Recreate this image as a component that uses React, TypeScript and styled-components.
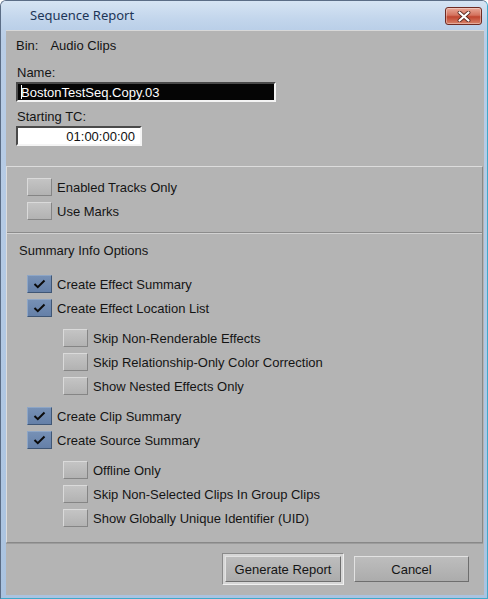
import React from "react";
import styled, { createGlobalStyle } from "styled-components";

const GlobalStyle = createGlobalStyle`
  html, body {
    margin: 0;
    padding: 0;
    background: #ffffff;
  }
`;

interface Option {
  label: string;
  checked?: boolean;
  nested?: boolean;
}

const summaryGroups: Option[][] = [
  [
    { label: "Create Effect Summary", checked: true },
    { label: "Create Effect Location List", checked: true },
  ],
  [
    { label: "Skip Non-Renderable Effects", nested: true },
    { label: "Skip Relationship-Only Color Correction", nested: true },
    { label: "Show Nested Effects Only", nested: true },
  ],
  [
    { label: "Create Clip Summary", checked: true },
    { label: "Create Source Summary", checked: true },
  ],
  [
    { label: "Offline Only", nested: true },
    { label: "Skip Non-Selected Clips In Group Clips", nested: true },
    { label: "Show Globally Unique Identifier (UID)", nested: true },
  ],
];

// Window frame
const Window = styled.div`
  width: 488px;
  height: 599px;
  box-sizing: border-box;
  display: flex;
  flex-direction: column;
  background: linear-gradient(#c9daee, #b9cde6 40px, #aac3e0);
  border: 1px solid #5b6d86;
  border-bottom-color: #3fa9c9;
  border-right-color: #3fa9c9;
  border-radius: 6px 6px 0 0;
  font-family: "Liberation Sans", Arial, sans-serif;
  font-size: 13px;
  color: #141414;
  overflow: hidden;
`;

const TitleBar = styled.div`
  height: 29px;
  flex-shrink: 0;
  display: flex;
  align-items: center;
  justify-content: space-between;
  padding: 0 5px 0 29px;
  background: linear-gradient(#d6e4f3, #c3d6ec 60%, #bacfe8);
`;

const Title = styled.span`
  font-family: "Noto Sans", "Open Sans", sans-serif;
  font-size: 13px;
  color: #1d3557;
  padding-bottom: 1px;
`;

const CloseButton = styled.div`
  width: 37px;
  height: 18px;
  box-sizing: border-box;
  margin-top: 1px;
  display: flex;
  align-items: center;
  justify-content: center;
  border: 1px solid #6e2a22;
  border-radius: 3px;
  background: linear-gradient(#e9a897, #d4725e 45%, #c0452f 55%, #d9836a);
  box-shadow: inset 0 0 0 1px rgba(255, 255, 255, 0.35);
`;

const Client = styled.div`
  flex: 1;
  display: flex;
  flex-direction: column;
  margin: 0 3px 3px 5px;
  background: #b4b4b4;
  border-top: 1px solid #d8d8d8;
`;

const TopSection = styled.div`
  display: flex;
  flex-direction: column;
  padding: 7px 10px 0 10px;
  height: 135px;
  box-sizing: border-box;
`;

const BinRow = styled.div`
  display: flex;
  gap: 12px;
  line-height: 15px;
`;

const FieldLabel = styled.div<{ $top: number }>`
  margin-top: ${(p) => p.$top}px;
  line-height: 15px;
  padding-left: 1px;
`;

const TextField = styled.div<{ $dark?: boolean; $width: number }>`
  width: ${(p) => p.$width}px;
  height: 20px;
  box-sizing: border-box;
  margin-top: 2px;
  display: flex;
  align-items: center;
  justify-content: ${(p) => (p.$dark ? "flex-start" : "flex-end")};
  padding: 0 ${(p) => (p.$dark ? "3px" : "5px")};
  border: 2px solid;
  border-color: #4a4a4a #f4f4f4 #f4f4f4 #4a4a4a;
  background: ${(p) => (p.$dark ? "#050505" : "#ffffff")};
  color: ${(p) => (p.$dark ? "#ffffff" : "#111111")};
  font-size: 13px;
`;

const Caret = styled.span`
  display: inline-block;
  width: 1px;
  height: 14px;
  background: #ffffff;
  margin-right: -1px;
`;

const Panel = styled.div`
  flex: 1;
  display: flex;
  flex-direction: column;
  margin-right: 1px;
  border: 1px solid;
  border-color: #dcdcdc #888888 #888888 #dcdcdc;
  box-shadow: 0 1px 0 #9c9c9c;
`;

const Section = styled.div<{ $grow?: boolean }>`
  display: flex;
  flex-direction: column;
  flex: ${(p) => (p.$grow ? 1 : "none")};
  padding: ${(p) => (p.$grow ? "10px 0 0 20px" : "8px 0 9px 20px")};
  & + & {
    border-top: 1px solid #8c8c8c;
    box-shadow: inset 0 1px 0 #d2d2d2;
  }
`;

const SectionTitle = styled.div`
  line-height: 15px;
  margin: 0 0 14px -8px;
`;

const Group = styled.div`
  display: flex;
  flex-direction: column;
  margin-bottom: 6px;
`;

const Row = styled.div<{ $nested?: boolean }>`
  display: flex;
  align-items: center;
  gap: 5px;
  height: 24px;
  padding-left: ${(p) => (p.$nested ? "36px" : "0")};
`;

const Box = styled.div<{ $checked?: boolean }>`
  width: 25px;
  height: 18px;
  box-sizing: border-box;
  display: flex;
  align-items: center;
  justify-content: center;
  border: 1px solid;
  border-color: ${(p) =>
    p.$checked ? "#8ea6c6 #3f5675 #3f5675 #8ea6c6" : "#dadada #858585 #858585 #dadada"};
  background: ${(p) =>
    p.$checked
      ? "linear-gradient(#7690b5, #6580a8)"
      : "linear-gradient(#c4c4c4, #b2b2b2)"};
`;

const Footer = styled.div`
  height: 52px;
  flex-shrink: 0;
  display: flex;
  align-items: center;
  justify-content: flex-end;
  gap: 10px;
  padding: 0 15px 0 0;
`;

const FocusRing = styled.div`
  padding: 2px;
  border: 1px solid;
  border-color: #8a8a8a #f0f0f0 #f0f0f0 #8a8a8a;
  background: #d6d6d6;
`;

const Button = styled.div<{ $width: number }>`
  width: ${(p) => p.$width}px;
  height: 26px;
  box-sizing: border-box;
  display: flex;
  align-items: center;
  justify-content: center;
  border: 1px solid;
  border-color: #e2e2e2 #6e6e6e #6e6e6e #e2e2e2;
  background: linear-gradient(#bdbdbd, #acacac);
  color: #151515;
`;

function Check() {
  return (
    <svg width="13" height="10" viewBox="0 0 13 10">
      <path d="M1.5 5 L4.8 8.2 L11.5 1.5" stroke="#0b0b0b" strokeWidth="2" fill="none" />
    </svg>
  );
}

function CloseGlyph() {
  return (
    <svg width="14" height="11" viewBox="0 0 14 11">
      <path
        d="M2.5 1.5 L11.5 9.5 M11.5 1.5 L2.5 9.5"
        stroke="#5a2a22"
        strokeWidth="3.8"
        strokeLinecap="round"
      />
      <path
        d="M2.5 1.5 L11.5 9.5 M11.5 1.5 L2.5 9.5"
        stroke="#ffffff"
        strokeWidth="2.2"
        strokeLinecap="round"
      />
    </svg>
  );
}

function CheckRow({ label, checked, nested }: Option) {
  return (
    <Row $nested={nested}>
      <Box $checked={checked}>{checked && <Check />}</Box>
      <span>{label}</span>
    </Row>
  );
}

export default function App() {
  return (
    <>
      <GlobalStyle />
      <Window>
        <TitleBar>
          <Title>Sequence Report</Title>
          <CloseButton>
            <CloseGlyph />
          </CloseButton>
        </TitleBar>
        <Client>
          <TopSection>
            <BinRow>
              <span>Bin:</span>
              <span>Audio Clips</span>
            </BinRow>
            <FieldLabel $top={12}>Name:</FieldLabel>
            <TextField $dark $width={260}>
              <Caret />
              BostonTestSeq.Copy.03
            </TextField>
            <FieldLabel $top={7}>Starting TC:</FieldLabel>
            <TextField $width={126}>01:00:00:00</TextField>
          </TopSection>
          <Panel>
            <Section>
              <CheckRow label="Enabled Tracks Only" />
              <CheckRow label="Use Marks" />
            </Section>
            <Section $grow>
              <SectionTitle>Summary Info Options</SectionTitle>
              {summaryGroups.map((group, i) => (
                <Group key={i}>
                  {group.map((opt) => (
                    <CheckRow key={opt.label} {...opt} />
                  ))}
                </Group>
              ))}
            </Section>
          </Panel>
          <Footer>
            <FocusRing>
              <Button $width={116}>Generate Report</Button>
            </FocusRing>
            <Button $width={115}>Cancel</Button>
          </Footer>
        </Client>
      </Window>
    </>
  );
}
